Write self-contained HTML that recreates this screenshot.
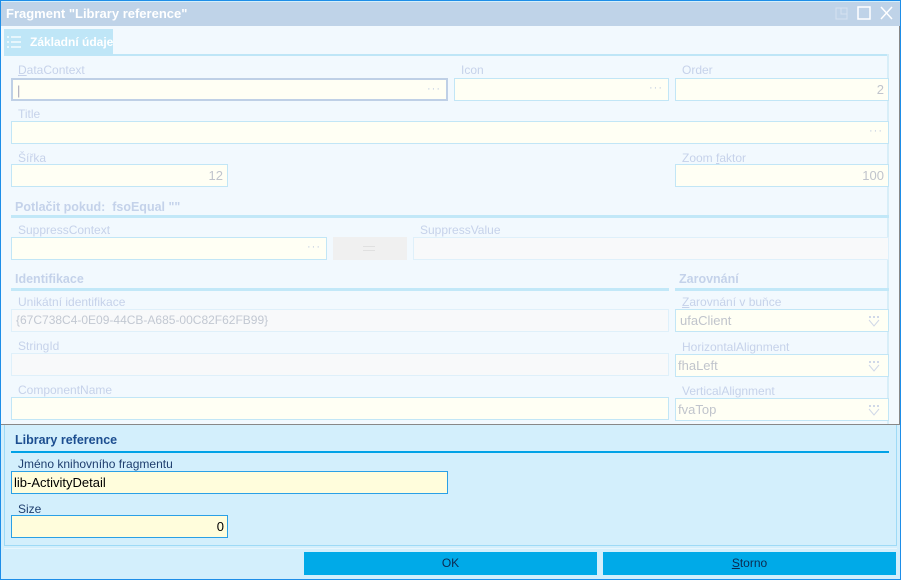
<!DOCTYPE html>
<html><head><meta charset="utf-8"><style>
*{box-sizing:border-box;margin:0;padding:0}
body{width:901px;height:580px;position:relative;overflow:hidden;background:#d3effc;font-family:"Liberation Sans",sans-serif;font-size:12px}
.a{position:absolute}
.lb{position:absolute;color:#c6d2ea;font-size:12px;line-height:14px}
.in{position:absolute;background:#fffff4;border:1px solid #c2e6f6;height:23px;color:#c0c4cc;line-height:21px;padding:0 4px;font-size:13px}
.gr{background:#f8f9fa;border-color:#dff0fa}
.r{text-align:right}
.dots{position:absolute;right:5px;top:-1px;color:#c0cce0;font-size:11px;letter-spacing:1px}
.h{position:absolute;color:#c4d2ea;font-weight:bold;font-size:12.5px}
.ln{position:absolute;height:3px;background:#c2e8f8}
.cb{position:absolute;right:8px;top:5px;width:12px;height:12px}
</style></head><body>
<div class="a" style="left:0;top:0;width:901px;height:580px;border:1px solid #1e8ee8"></div>
<div class="a" style="left:1px;top:2px;width:899px;height:24px;background:#bfd3e8"></div>
<div class="a" style="left:6px;top:6px;color:#fff;font-weight:bold;font-size:13px">Fragment "Library reference"</div>
<svg class="a" style="left:834px;top:6px" width="62" height="16"><rect x="2" y="2" width="11" height="11" fill="none" stroke="#d6e2f0"/><path d="M7 2v6h6" fill="none" stroke="#d6e2f0"/><rect x="24" y="1" width="12" height="12" fill="none" stroke="#fff" stroke-width="1.5"/><path d="M47 1l11 12M58 1l-11 12" stroke="#fff" stroke-width="1.5"/></svg>
<!-- faded panel -->
<div class="a" style="left:1px;top:26px;width:899px;height:399px;background:#f2f9fe;border-right:1px solid #888;border-bottom:1px solid #888"></div>
<div class="a" style="left:4px;top:29px;width:109px;height:25px;background:#bfe6f7"></div>
<svg class="a" style="left:7px;top:35px" width="18" height="14"><path d="M0 2h2M4 2h10M0 7h2M4 7h10M0 12h2M4 12h10" stroke="#fff" stroke-width="1.2"/></svg>
<div class="a" style="left:30px;top:35px;color:#fff;font-weight:bold;font-size:12px">Základní údaje</div>
<div class="a" style="left:4px;top:54px;width:885px;height:2px;background:#bfe6f7"></div>
<div class="a" style="left:887px;top:54px;width:2px;height:370px;background:#d8eef8"></div>

<div class="lb" style="left:18px;top:63px"><u>D</u>ataContext</div>
<div class="in" style="left:11px;top:78px;width:437px;border:2px solid #bfd0e6;height:23px"><span style="color:#aab">|</span><span class="dots">···</span></div>
<div class="lb" style="left:461px;top:63px">Icon</div>
<div class="in" style="left:454px;top:78px;width:215px"><span class="dots">···</span></div>
<div class="lb" style="left:682px;top:63px">Order</div>
<div class="in r" style="left:675px;top:78px;width:214px">2</div>

<div class="lb" style="left:18px;top:107px">Title</div>
<div class="in" style="left:11px;top:121px;width:878px"><span class="dots">···</span></div>

<div class="lb" style="left:18px;top:151px">Šířka</div>
<div class="in r" style="left:11px;top:164px;width:217px">12</div>
<div class="lb" style="left:682px;top:151px">Zoom <u>f</u>aktor</div>
<div class="in r" style="left:675px;top:164px;width:214px">100</div>

<div class="h" style="left:15px;top:200px">Potlačit pokud:&nbsp; fsoEqual ""</div>
<div class="ln" style="left:11px;top:215px;width:878px"></div>
<div class="lb" style="left:18px;top:223px">SuppressContext</div>
<div class="in" style="left:11px;top:237px;width:316px"><span class="dots">···</span></div>
<div class="a" style="left:333px;top:237px;width:74px;height:23px;background:#f0f0f0"><div class="a" style="left:30px;top:9px;width:12px;height:5px;border-top:1px solid #e0e0e0;border-bottom:1px solid #e0e0e0"></div></div>
<div class="lb" style="left:420px;top:223px">SuppressValue</div>
<div class="in gr" style="left:413px;top:237px;width:476px"></div>

<div class="h" style="left:15px;top:272px">Identifikace</div>
<div class="ln" style="left:11px;top:288px;width:658px"></div>
<div class="h" style="left:679px;top:272px">Zarovnání</div>
<div class="ln" style="left:675px;top:288px;width:214px"></div>

<div class="lb" style="left:18px;top:295px">Unikátní identifikace</div>
<div class="in gr" style="left:11px;top:309px;width:658px;color:#c2c8d2;font-size:12px">{67C738C4-0E09-44CB-A685-00C82F62FB99}</div>
<div class="lb" style="left:18px;top:339px">StringId</div>
<div class="in gr" style="left:11px;top:353px;width:658px"></div>
<div class="lb" style="left:18px;top:383px">ComponentName</div>
<div class="in" style="left:11px;top:397px;width:658px"></div>

<div class="lb" style="left:682px;top:295px"><u>Z</u>arovnání v buňce</div>
<div class="in" style="left:675px;top:309px;width:214px">ufaClient<svg class="cb" viewBox="0 0 12 12"><path d="M1 1h2v2H1zM5 1h2v2H5zM9 1h2v2H9z" fill="#d0d8e8"/><path d="M1 5l5 6 5-6" fill="none" stroke="#d0d8e8"/></svg></div>
<div class="lb" style="left:682px;top:340px">HorizontalAlignment</div>
<div class="in" style="left:675px;top:354px;width:214px;padding-left:2px">fhaLeft<svg class="cb" viewBox="0 0 12 12"><path d="M1 1h2v2H1zM5 1h2v2H5zM9 1h2v2H9z" fill="#d0d8e8"/><path d="M1 5l5 6 5-6" fill="none" stroke="#d0d8e8"/></svg></div>
<div class="lb" style="left:682px;top:384px">VerticalAlignment</div>
<div class="in" style="left:675px;top:398px;width:214px;padding-left:2px">fvaTop<svg class="cb" viewBox="0 0 12 12"><path d="M1 1h2v2H1zM5 1h2v2H5zM9 1h2v2H9z" fill="#d0d8e8"/><path d="M1 5l5 6 5-6" fill="none" stroke="#d0d8e8"/></svg></div>

<!-- lower active part -->
<div class="a" style="left:4px;top:425px;width:893px;height:121px;border:1px solid #9edaf6;border-top:none"></div>
<div class="a" style="left:15px;top:433px;color:#1c4e90;font-weight:bold;font-size:12.5px">Library reference</div>
<div class="a" style="left:11px;top:451px;width:878px;height:2px;background:#00a2e6"></div>
<div class="a" style="left:18px;top:457px;color:#1e3e6e;font-size:12px">Jméno knihovního fragmentu</div>
<div class="a" style="left:11px;top:471px;width:437px;height:23px;background:#fffddc;border:1px solid #2aa0e6;padding-left:2px;line-height:21px;font-size:13px;color:#000">lib-ActivityDetail</div>
<div class="a" style="left:18px;top:502px;color:#1e3e6e;font-size:12px">Size</div>
<div class="a" style="left:11px;top:515px;width:217px;height:23px;background:#fffddc;border:1px solid #2aa0e6;padding-right:3px;line-height:21px;font-size:13px;color:#000;text-align:right">0</div>
<div class="a" style="left:4px;top:548px;width:893px;height:1px;background:#e8f6fd"></div>
<div class="a" style="left:304px;top:552px;width:293px;height:23px;background:#00aae8;text-align:center;line-height:23px;color:#0c2a50">OK</div>
<div class="a" style="left:603px;top:552px;width:293px;height:23px;background:#00aae8;text-align:center;line-height:23px;color:#0c2a50"><u>S</u>torno</div>
</body></html>
